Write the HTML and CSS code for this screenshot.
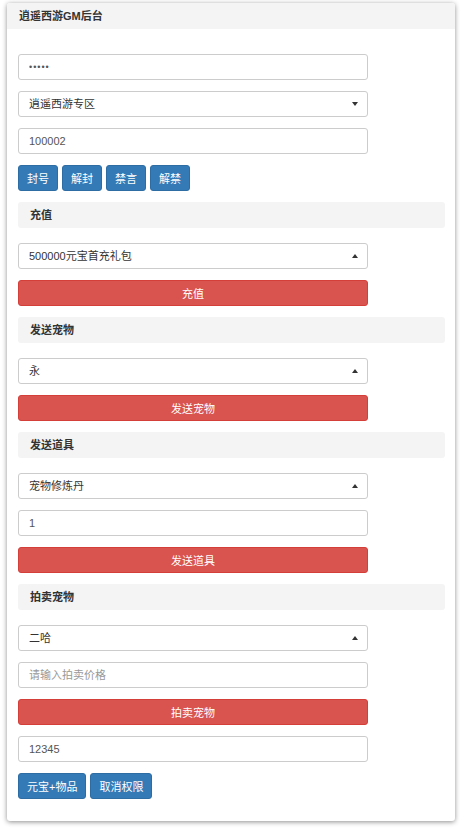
FILE: index.html
```html
<!DOCTYPE html>
<html lang="zh-CN">
<head>
  <meta charset="UTF-8">
  <meta name="viewport" content="width=device-width, initial-scale=1.0">
  <title>逍遥西游GM后台</title>
  <link rel="stylesheet" href="styles.css">
</head>
<body>
  <div class="panel">
    <div class="panel-heading">逍遥西游GM后台</div>
    <div class="panel-body">
      <input type="password" class="form-control" value="12345">
      <div class="select-box">
        <select class="form-control">
          <option>逍遥西游专区</option>
        </select>
      </div>
      <input type="text" class="form-control" value="100002">
      <div class="btn-row">
        <button class="btn btn-primary">封号</button>
        <button class="btn btn-primary">解封</button>
        <button class="btn btn-primary">禁言</button>
        <button class="btn btn-primary">解禁</button>
      </div>

      <!-- 充值 -->
      <div class="section-title">充值</div>
      <div class="select-box dropup">
        <select class="form-control">
          <option>500000元宝首充礼包</option>
        </select>
      </div>
      <button class="btn btn-danger btn-block">充值</button>

      <!-- 发送宠物 -->
      <div class="section-title">发送宠物</div>
      <div class="select-box dropup">
        <select class="form-control">
          <option>永</option>
        </select>
      </div>
      <button class="btn btn-danger btn-block">发送宠物</button>

      <!-- 发送道具 -->
      <div class="section-title">发送道具</div>
      <div class="select-box dropup">
        <select class="form-control">
          <option>宠物修炼丹</option>
        </select>
      </div>
      <input type="text" class="form-control" value="1">
      <button class="btn btn-danger btn-block">发送道具</button>

      <!-- 拍卖宠物 -->
      <div class="section-title">拍卖宠物</div>
      <div class="select-box dropup">
        <select class="form-control">
          <option>二哈</option>
        </select>
      </div>
      <input type="text" class="form-control" placeholder="请输入拍卖价格">
      <button class="btn btn-danger btn-block">拍卖宠物</button>

      <input type="text" class="form-control" value="12345">
      <div class="btn-row last">
        <button class="btn btn-primary">元宝+物品</button>
        <button class="btn btn-primary">取消权限</button>
      </div>
    </div>
  </div>
</body>
</html>
```

FILE: styles.css
```css
body {
  margin: 0;
  padding: 3px 5px 8px 7px;
  font-family: "Liberation Sans", "Noto Sans CJK SC", sans-serif;
  font-size: 11px;
  color: #333;
  background-color: #fff;
}

.panel {
  background-color: #fff;
  border-radius: 3px;
  box-shadow: 0 1px 5px rgba(0,0,0,0.45);
}

.panel-heading {
  height: 26px;
  line-height: 26px;
  padding-left: 12px;
  background-color: #f4f4f4;
  border-radius: 3px 3px 0 0;
  font-weight: bold;
}

.panel-body {
  padding: 25px 10px 22px 11px;
}

.form-control {
  display: block;
  box-sizing: border-box;
  width: 350px;
  height: 26px;
  margin: 0 0 11px 0;
  padding: 0 10px;
  font-family: inherit;
  font-size: 11px;
  color: #555;
  background-color: #fff;
  border: 1px solid #ccc;
  border-radius: 3px;
  outline: none;
}

.form-control::placeholder {
  color: #999;
}

input[type="password"].form-control {
  font-size: 9px;
  letter-spacing: 1px;
}

select.form-control {
  appearance: none;
  -webkit-appearance: none;
  margin: 0;
  color: #333;
}

.select-box {
  position: relative;
  width: 350px;
  margin-bottom: 11px;
}

/* 下拉箭头 */
.select-box:after {
  content: "";
  position: absolute;
  right: 10px;
  top: 11px;
  border-left: 3px solid transparent;
  border-right: 3px solid transparent;
  border-top: 4px solid #333;
  pointer-events: none;
}

.select-box.dropup:after {
  border-top: none;
  border-bottom: 4px solid #333;
}

.btn-row {
  display: flex;
  gap: 4px;
  margin-bottom: 11px;
}

.btn-row.last {
  margin-bottom: 0;
}

.btn {
  box-sizing: border-box;
  height: 26px;
  padding: 0 8px;
  font-family: inherit;
  font-size: 11px;
  color: #fff;
  border: 1px solid transparent;
  border-radius: 3px;
  cursor: pointer;
}

.btn-primary {
  background-color: #337ab7;
  border-color: #2e6da4;
}

.btn-danger {
  background-color: #d9534f;
  border-color: #d43f3a;
}

.btn-block {
  display: block;
  width: 350px;
  margin-bottom: 11px;
}

.section-title {
  height: 26px;
  line-height: 26px;
  padding-left: 12px;
  margin-bottom: 15px;
  background-color: #f4f4f4;
  border-radius: 3px;
  font-weight: bold;
}
```
